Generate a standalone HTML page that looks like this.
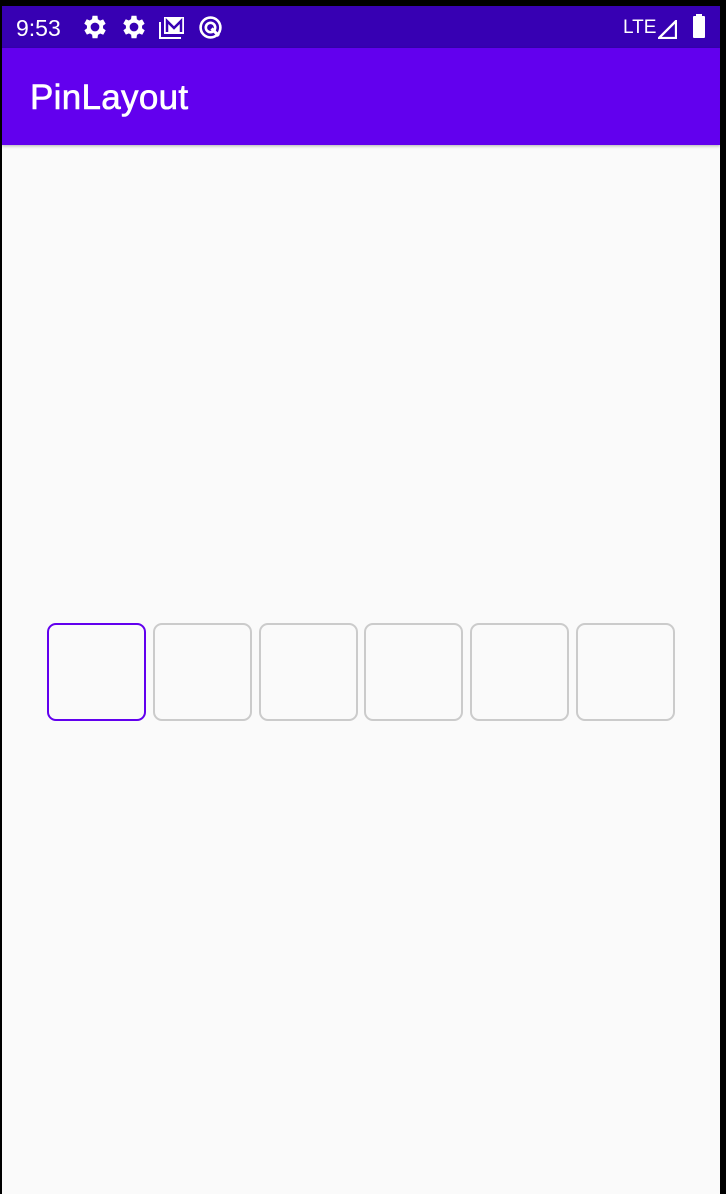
<!DOCTYPE html>
<html><head><meta charset="utf-8"><style>
*{margin:0;padding:0;box-sizing:border-box}
html,body{width:726px;height:1194px;background:#000;overflow:hidden;font-family:"Liberation Sans",sans-serif}
#scr{position:absolute;left:2px;top:6px;width:718px;height:1188px;background:#fafafa}
#sb{position:absolute;left:0;top:0;width:718px;height:42px;background:#3700b3;color:#fff}
#ab{position:absolute;left:0;top:42px;width:718px;height:97px;background:#6200ee;box-shadow:0 1px 3px rgba(0,0,0,.3)}
#ab span{position:absolute;left:28px;top:30px;font-size:35px;color:#fff;letter-spacing:0.3px;-webkit-text-stroke:0.6px #fff}
.b{position:absolute;top:617px;width:99px;height:98px;border:2px solid #cbcbcb;border-radius:9px}
.b.a{border-color:#6200ee}
</style></head><body>
<div id="scr">
<div id="sb">
<span style="position:absolute;left:14px;top:9px;font-size:23px">9:53</span>
<svg style="position:absolute;left:78px;top:6px" width="30" height="30" viewBox="0 0 24 24"><path fill="#fff" d="M19.4 13a7.5 7.5 0 000-2l2.1-1.6-2-3.5-2.5 1a7 7 0 00-1.7-1L15 3h-4l-.4 2.8a7 7 0 00-1.7 1l-2.5-1-2 3.5L6.6 11a7.5 7.5 0 000 2l-2.1 1.6 2 3.5 2.5-1a7 7 0 001.7 1L11 21h4l.4-2.8a7 7 0 001.7-1l2.5 1 2-3.5zM13 15.5a3.5 3.5 0 110-7 3.5 3.5 0 010 7z" transform="translate(-1 0)"/></svg>
<svg style="position:absolute;left:117px;top:6px" width="30" height="30" viewBox="0 0 24 24"><path fill="#fff" d="M19.4 13a7.5 7.5 0 000-2l2.1-1.6-2-3.5-2.5 1a7 7 0 00-1.7-1L15 3h-4l-.4 2.8a7 7 0 00-1.7 1l-2.5-1-2 3.5L6.6 11a7.5 7.5 0 000 2l-2.1 1.6 2 3.5 2.5-1a7 7 0 001.7 1L11 21h4l.4-2.8a7 7 0 001.7-1l2.5 1 2-3.5zM13 15.5a3.5 3.5 0 110-7 3.5 3.5 0 010 7z" transform="translate(-1 0)"/></svg>
<svg style="position:absolute;left:157px;top:9px" width="27" height="25" viewBox="0 0 27 25"><path fill="none" stroke="#fff" stroke-width="2" d="M1 7v16h21"/><rect x="5" y="2" width="20" height="17" fill="#fff"/><path fill="none" stroke="#3700b3" stroke-width="2.5" d="M8 17V6l7 7 7-7v11"/></svg>
<svg style="position:absolute;left:196px;top:9px" width="25" height="25" viewBox="0 0 24 24"><circle cx="12" cy="12" r="9.5" fill="none" stroke="#fff" stroke-width="2.5"/><circle cx="12" cy="12" r="4.5" fill="none" stroke="#fff" stroke-width="2.5"/><path d="M13 13l7 7" stroke="#fff" stroke-width="3"/></svg>
<span style="position:absolute;left:621px;top:11px;font-size:19px">LTE</span>
<svg style="position:absolute;left:656px;top:14px" width="19" height="19" viewBox="0 0 20 20"><path d="M1 19L19 1v18z" fill="none" stroke="#fff" stroke-width="2.5"/></svg>
<div style="position:absolute;left:691px;top:10px;width:12px;height:22px;background:#fff;border-radius:1px"></div>
<div style="position:absolute;left:694px;top:8px;width:6px;height:3px;background:#fff"></div>
</div>
<div id="ab"><span>PinLayout</span></div>
<div class="b a" style="left:45px"></div>
<div class="b" style="left:151px"></div>
<div class="b" style="left:257px"></div>
<div class="b" style="left:362px"></div>
<div class="b" style="left:468px"></div>
<div class="b" style="left:574px"></div>
</div>
</body></html>
